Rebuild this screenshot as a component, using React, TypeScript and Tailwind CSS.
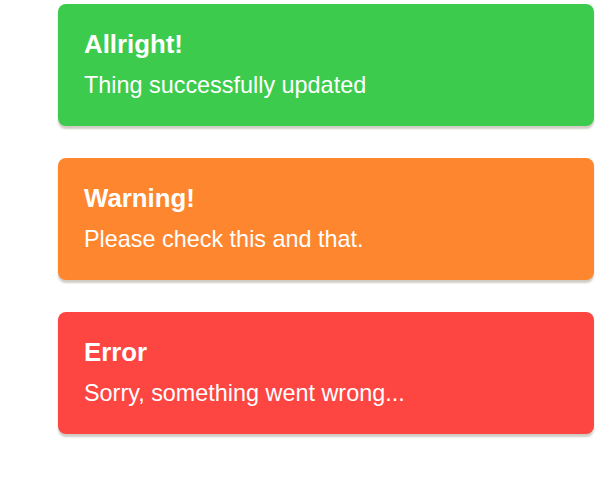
import React from 'react';

const ALERTS = [
  { title: 'Allright!', text: 'Thing successfully updated', color: 'bg-[#3ccb4d]' },
  { title: 'Warning!', text: 'Please check this and that.', color: 'bg-[#fe862f]' },
  { title: 'Error', text: 'Sorry, something went wrong...', color: 'bg-[#fd4542]' },
];

const App: React.FC = () => {
  return (
    <div className="w-[612px] h-[478px] bg-white font-[family-name:'Liberation_Sans',Arial,sans-serif]">
      <div className="flex flex-col gap-[32px] pl-[58px] pt-[4px] w-[594px]">
        {ALERTS.map((a) => (
          <div
            key={a.title}
            className={`${a.color} h-[122px] rounded-[8px] pl-[26px] pt-[25px] text-white shadow-[0_3px_2px_rgba(120,110,90,0.35)]`}
          >
            <h3 className="text-[25.8px] leading-[30px] font-bold">{a.title}</h3>
            <p className="mt-[11px] text-[23.4px] leading-[30px]">{a.text}</p>
          </div>
        ))}
      </div>
    </div>
  );
};

export default App;
